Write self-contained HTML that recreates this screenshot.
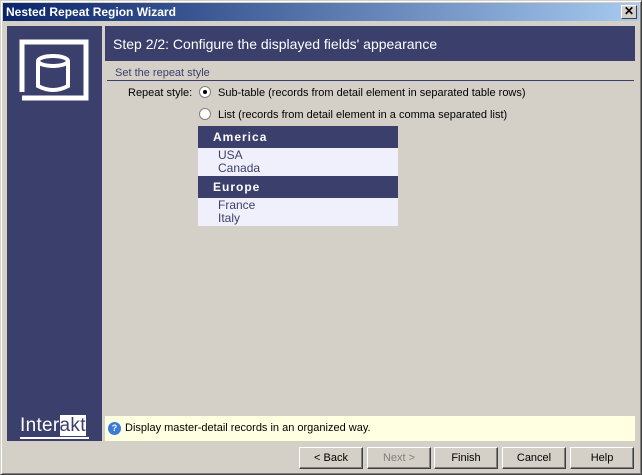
<html><head><style>
body{margin:0;width:642px;height:475px;background:#d4d0c8;position:relative;overflow:hidden;font-family:"Liberation Sans",Arial,sans-serif;font-size:11px;color:#000}
div{position:absolute;box-sizing:border-box;white-space:nowrap}
.btn{top:447px;height:22px;width:64px;background:#d4d0c8;border:1px solid;border-color:#fff #404040 #404040 #fff;box-shadow:inset -1px -1px #808080;text-align:center;line-height:20px}
.cell{left:0;width:200px;padding-left:20px}
</style></head><body>
<div style="left:0;top:0;width:642px;height:475px;border:1px solid;border-color:#d4d0c8 #404040 #404040 #d4d0c8;box-shadow:inset 1px 1px #fff,inset -1px -1px #808080"></div>
<div style="left:3px;top:3px;width:636px;height:18px;background:linear-gradient(90deg,#0a246a,#a6caf0);color:#fff;font-weight:bold;font-size:12px;line-height:18px;padding-left:3px">Nested Repeat Region Wizard</div>
<div style="left:621px;top:5px;width:16px;height:14px;background:#d4d0c8;border:1px solid;border-color:#fff #404040 #404040 #fff;font-weight:bold;font-size:12px;line-height:11px;text-align:center">✕</div>
<div style="left:7px;top:26px;width:95px;height:415px;background:#3b3f6b"></div>
<svg style="position:absolute;left:7px;top:26px" width="95" height="80"><path d="M15 66 V16 H79 V72 H15" fill="none" stroke="#fff" stroke-width="5"/><ellipse cx="46" cy="35" rx="15" ry="5" fill="none" stroke="#fff" stroke-width="4"/><path d="M31 35 V60 Q46 68 61 60 V35" fill="none" stroke="#fff" stroke-width="4"/></svg>
<div style="left:20px;top:415px;width:69px;height:24px;color:#fff;font-size:19px;letter-spacing:0.3px;border-bottom:2px solid #fff;line-height:22px">Inter<span style="background:#fff;color:#3b3f6b">akt</span></div>
<div style="left:105px;top:26px;width:530px;height:35px;background:#3b3f6b;color:#fff;font-size:14px;line-height:36px;padding-left:8px">Step 2/2: Configure the displayed fields' appearance</div>
<div style="left:115px;top:67px;color:#3b3f6b">Set the repeat style</div>
<div style="left:107px;top:80px;width:527px;height:1px;background:#3b3f6b"></div>
<div style="left:128px;top:87px">Repeat style:</div>
<div style="left:199px;top:86px;width:12px;height:12px;border-radius:50%;background:#fff;border:1px solid #808080"><div style="left:3px;top:3px;width:4px;height:4px;border-radius:50%;background:#000"></div></div>
<div style="left:218px;top:87px">Sub-table (records from detail element in separated table rows)</div>
<div style="left:199px;top:108px;width:12px;height:12px;border-radius:50%;background:#fff;border:1px solid #808080"></div>
<div style="left:218px;top:109px">List (records from detail element in a comma separated list)</div>
<div style="left:198px;top:126px;width:200px;height:100px;background:#f0f0fc;color:#3b3f6b;font-size:12px">
<div class="cell" style="top:0;height:22px;background:#3b3f6b;color:#fff;font-weight:bold;line-height:22px;padding-left:15px;letter-spacing:1px">America</div>
<div class="cell" style="top:23px;line-height:13px">USA<br>Canada</div>
<div class="cell" style="top:50px;height:22px;background:#3b3f6b;color:#fff;font-weight:bold;line-height:22px;padding-left:15px;letter-spacing:1px">Europe</div>
<div class="cell" style="top:73px;line-height:13px">France<br>Italy</div>
</div>
<div style="left:105px;top:416px;width:530px;height:25px;background:#ffffe1;line-height:25px;padding-left:20px">Display master-detail records in an organized way.</div>
<div style="left:108px;top:422px;width:13px;height:13px;border-radius:50%;background:#3a7bd5;color:#fff;font-size:9px;font-weight:bold;text-align:center;line-height:13px">?</div>
<div class="btn" style="left:299px">&lt; Back</div>
<div class="btn" style="left:367px;color:#808080">Next &gt;</div>
<div class="btn" style="left:434px">Finish</div>
<div class="btn" style="left:502px">Cancel</div>
<div class="btn" style="left:570px">Help</div>
</body></html>
